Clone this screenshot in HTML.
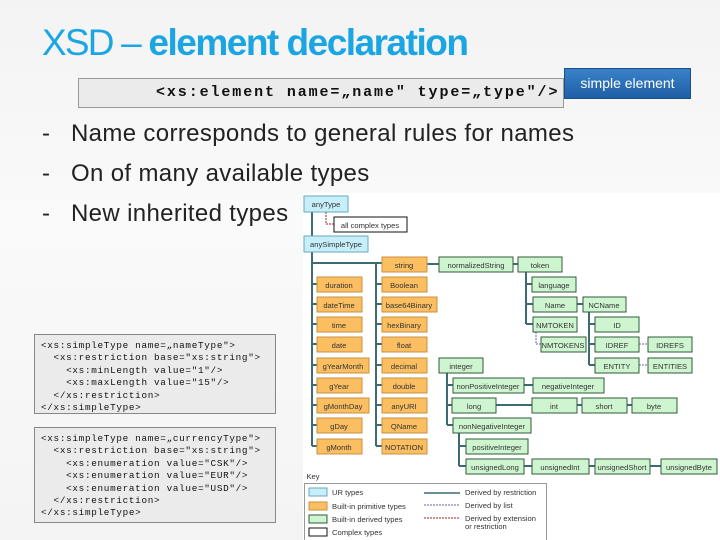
<!DOCTYPE html>
<html><head><meta charset="utf-8"><style>
body{margin:0;width:720px;height:540px;overflow:hidden;background:linear-gradient(#f3f3f3,#fafafa 40%,#f4f4f4);position:relative;font-family:"Liberation Sans",sans-serif}
.t{position:absolute;left:42px;top:22px;font-size:37px;color:#1ba6e3;letter-spacing:-1.8px;white-space:nowrap}
.t b{letter-spacing:-1.5px}
.code1{position:absolute;left:78px;top:78px;width:486px;height:30px;box-sizing:border-box;background:#ebebeb;border:1px solid #999;font:bold 15px "Liberation Mono",monospace;line-height:28px;text-align:left;padding-left:77px;color:#111;letter-spacing:1.9px;white-space:nowrap}
.badge{position:absolute;left:564px;top:68px;width:125px;height:29px;background:linear-gradient(#3a82c8,#1f5fa6);color:#fff;font-size:14px;line-height:28px;text-align:center;border:1px solid #1a4f8a}
.b{position:absolute;left:42px;font-size:24px;color:#222;letter-spacing:0.35px;white-space:nowrap}
.b span{position:absolute;left:29px;letter-spacing:0.35px}
.cb{position:absolute;left:34px;width:242px;background:#ebebeb;border:1px solid #888;font:9.3px "Liberation Mono",monospace;line-height:12.4px;color:#111;white-space:pre;padding:5px 0 0 6px;box-sizing:border-box;letter-spacing:0.7px}
svg{position:absolute;left:0;top:0}
svg text{font-family:"Liberation Sans",sans-serif;font-size:7.6px;fill:#333;text-anchor:middle}
</style></head><body>
<div class="t">XSD – <b>element declaration</b></div>
<div class="code1">&lt;xs:element name=„name" type=„type"/&gt;</div>
<div class="badge">simple element</div>
<div class="b" style="top:120px">-<span>Name corresponds to general rules for names</span></div>
<div class="b" style="top:160px">-<span>On of many available types</span></div>
<div class="b" style="top:200px">-<span>New inherited types</span></div>
<div class="cb" style="top:334px;height:80px">&lt;xs:simpleType name=„nameType"&gt;
  &lt;xs:restriction base="xs:string"&gt;
    &lt;xs:minLength value="1"/&gt;
    &lt;xs:maxLength value="15"/&gt;
  &lt;/xs:restriction&gt;
&lt;/xs:simpleType&gt;</div>
<div class="cb" style="top:427px;height:96px">&lt;xs:simpleType name=„currencyType"&gt;
  &lt;xs:restriction base="xs:string"&gt;
    &lt;xs:enumeration value="CSK"/&gt;
    &lt;xs:enumeration value="EUR"/&gt;
    &lt;xs:enumeration value="USD"/&gt;
  &lt;/xs:restriction&gt;
&lt;/xs:simpleType&gt;</div>
<svg width="720" height="540">
<rect x="303" y="193" width="417" height="347" fill="#fff"/>
<g stroke="#3d6a74" stroke-width="2" fill="none">
<path d="M312 212V446M312 263H382M376 263V446M312 284H317M312 304H317M312 324H317M312 344H317M312 365H317M312 385H317M312 405H317M312 425H317M312 446H317M376 284H382M376 304H382M376 324H382M376 344H382M376 365H382M376 385H382M376 405H382M376 425H382M376 446H382"/>
<path d="M427 264H439M513 264H518M526 272V324M526 284H532M526 304H533M526 324H533M577 304H583M589 312V365M589 324H595M589 344H595M589 365H595"/>
<path d="M447 373V425M447 385H453M447 405H452M447 425H453M524 385H533M496 405H532M577 405H582M627 405H632M459 432V466M459 446H466M459 466H466M524 466H532M589 466H595M650 466H661"/>
</g>
<path d="M536 332V344H541M639 344H648M639 365H648" stroke="#9a9ac8" stroke-width="1.5" fill="none" stroke-dasharray="2 1"/>
<path d="M326 212V224H334" stroke="#a02020" stroke-width="1" fill="none" stroke-dasharray="2 1"/>
<g stroke-width="1">
<rect x="304" y="196" width="44" height="16" fill="#c6effa" stroke="#6aaabb"/>
<rect x="334" y="217" width="73" height="15" fill="#fff" stroke="#111"/>
<rect x="304" y="236" width="64" height="16" fill="#c6effa" stroke="#6aaabb"/>
<g fill="#fbbf62" stroke="#c89040">
<rect x="317" y="277" width="45" height="15"/><rect x="317" y="297" width="45" height="15"/><rect x="317" y="317" width="45" height="15"/><rect x="317" y="337" width="45" height="15"/><rect x="317" y="358" width="52" height="15"/><rect x="317" y="378" width="45" height="15"/><rect x="317" y="398" width="52" height="15"/><rect x="317" y="418" width="45" height="15"/><rect x="317" y="439" width="45" height="15"/>
<rect x="382" y="257" width="45" height="15"/><rect x="382" y="277" width="45" height="15"/><rect x="382" y="297" width="55" height="15"/><rect x="382" y="317" width="45" height="15"/><rect x="382" y="337" width="45" height="15"/><rect x="382" y="358" width="45" height="15"/><rect x="382" y="378" width="45" height="15"/><rect x="382" y="398" width="45" height="15"/><rect x="382" y="418" width="45" height="15"/><rect x="382" y="439" width="45" height="15"/>
</g>
<g fill="#cff5d0" stroke="#2f5a38">
<rect x="439" y="257" width="74" height="15"/><rect x="518" y="257" width="44" height="15"/><rect x="532" y="277" width="44" height="15"/><rect x="533" y="297" width="44" height="15"/><rect x="583" y="297" width="43" height="15"/><rect x="533" y="317" width="44" height="15"/><rect x="541" y="337" width="45" height="15"/><rect x="595" y="317" width="44" height="15"/><rect x="595" y="337" width="44" height="15"/><rect x="648" y="337" width="44" height="15"/><rect x="595" y="358" width="44" height="15"/><rect x="648" y="358" width="44" height="15"/>
<rect x="439" y="358" width="44" height="15"/><rect x="453" y="378" width="71" height="15"/><rect x="533" y="378" width="71" height="15"/><rect x="452" y="398" width="44" height="15"/><rect x="532" y="398" width="45" height="15"/><rect x="582" y="398" width="45" height="15"/><rect x="632" y="398" width="45" height="15"/><rect x="453" y="418" width="78" height="15"/><rect x="466" y="439" width="62" height="15"/><rect x="466" y="459" width="58" height="15"/><rect x="532" y="459" width="57" height="15"/><rect x="595" y="459" width="55" height="15"/><rect x="661" y="459" width="56" height="15"/>
</g></g>
<text x="326" y="207">anyType</text><text x="370" y="228">all complex types</text><text x="336" y="247">anySimpleType</text>
<text x="339" y="288">duration</text><text x="339" y="308">dateTime</text><text x="339" y="328">time</text><text x="339" y="348">date</text><text x="343" y="369">gYearMonth</text><text x="339" y="389">gYear</text><text x="343" y="409">gMonthDay</text><text x="339" y="429">gDay</text><text x="339" y="450">gMonth</text>
<text x="404" y="268">string</text><text x="404" y="288">Boolean</text><text x="409" y="308">base64Binary</text><text x="404" y="328">hexBinary</text><text x="404" y="348">float</text><text x="404" y="369">decimal</text><text x="404" y="389">double</text><text x="404" y="409">anyURI</text><text x="404" y="429">QName</text><text x="404" y="450">NOTATION</text>
<text x="476" y="268">normalizedString</text><text x="540" y="268">token</text><text x="554" y="288">language</text><text x="555" y="308">Name</text><text x="604" y="308">NCName</text><text x="555" y="328">NMTOKEN</text><text x="563" y="348">NMTOKENS</text><text x="617" y="328">ID</text><text x="617" y="348">IDREF</text><text x="670" y="348">IDREFS</text><text x="617" y="369">ENTITY</text><text x="670" y="369">ENTITIES</text>
<text x="461" y="369">integer</text><text x="488" y="389">nonPositiveInteger</text><text x="568" y="389">negativeInteger</text><text x="474" y="409">long</text><text x="554" y="409">int</text><text x="604" y="409">short</text><text x="654" y="409">byte</text><text x="492" y="429">nonNegativeInteger</text><text x="497" y="450">positiveInteger</text><text x="495" y="470">unsignedLong</text><text x="560" y="470">unsignedInt</text><text x="622" y="470">unsignedShort</text><text x="689" y="470">unsignedByte</text>
<text x="313" y="479">Key</text>
<rect x="304.5" y="483.5" width="242" height="60" fill="#fff" stroke="#999"/>
<rect x="309" y="488" width="18" height="8" fill="#c6effa" stroke="#6aaabb"/><rect x="309" y="502" width="18" height="8" fill="#fbbf62" stroke="#c89040"/><rect x="309" y="515" width="18" height="8" fill="#cff5d0" stroke="#2f5a38"/><rect x="309" y="528" width="18" height="8" fill="#fff" stroke="#111"/>
<g><text x="332" y="495" style="text-anchor:start">UR types</text><text x="332" y="509" style="text-anchor:start">Built-in primitive types</text><text x="332" y="522" style="text-anchor:start">Built-in derived types</text><text x="332" y="535" style="text-anchor:start">Complex types</text>
<text x="465" y="495" style="text-anchor:start">Derived by restriction</text><text x="465" y="508" style="text-anchor:start">Derived by list</text><text x="465" y="521" style="text-anchor:start">Derived by extension</text><text x="465" y="529" style="text-anchor:start">or restriction</text></g>
<path d="M424 493H460" stroke="#3d6a74" stroke-width="1.5"/><path d="M424 505H460" stroke="#9a9ac8" stroke-width="1.5" stroke-dasharray="2 1"/><path d="M424 518H460" stroke="#a02020" stroke-width="1" stroke-dasharray="2 1"/>
</svg>
</body></html>
